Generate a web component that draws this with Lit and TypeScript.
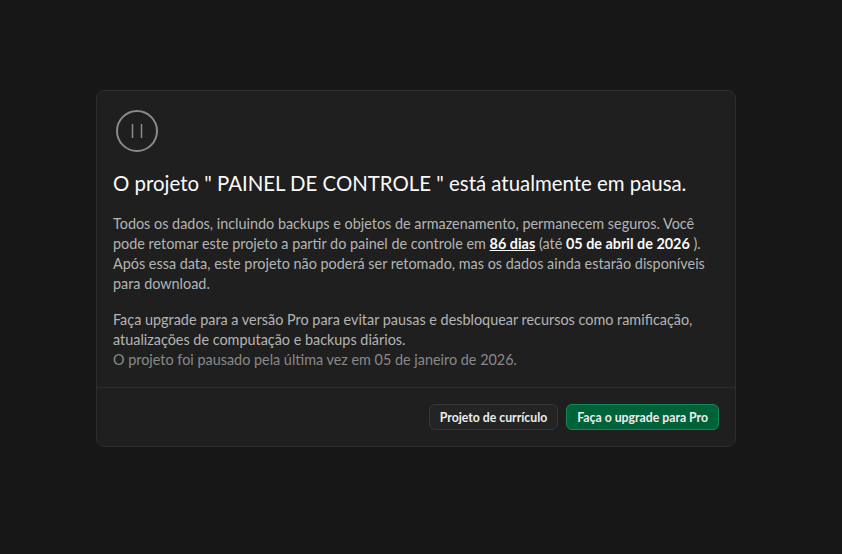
import { LitElement, html, css } from "lit";
import { customElement } from "lit/decorators.js";

@customElement("app-root")
export class AppRoot extends LitElement {
  static styles = css`
    :host { display: flex; width: 100%; height: 554px; background: #171717; align-items: flex-start; justify-content: flex-start; font-family: "Lato", "Liberation Sans", sans-serif; box-sizing: border-box; padding: 90px 0 0 96px; }
    .card { width: 640px; box-sizing: border-box; background: #1f1f1f; border: 1px solid #2e2e2e; border-radius: 8px; }
    .top { padding: 19px 16px 17px; }
    .icon { display: block; margin-left: 3px; margin-bottom: 17px; }
    h2 { margin: 0 0 17px; font-size: 20.4px; line-height: 28px; font-weight: 400; color: #fafafa; }
    p { margin: 0; font-size: 14.4px; line-height: 20px; color: #b4b4b4; }
    p + p { margin-top: 16px; }
    b { font-weight: 700; color: #fafafa; }
    .u { text-decoration: underline; }
    .dim { color: #898989; display: block; }
    .foot { display: flex; justify-content: flex-end; gap: 8px; border-top: 1px solid #2e2e2e; padding: 16px; }
    button { font: inherit; font-size: 12.25px; font-weight: 700; height: 26px; padding: 0 10px; border-radius: 6px; color: #ededed; background: #242424; border: 1px solid #363636; }
    .pri { background: #006239; border-color: #128a5a; }
  `;
  render() {
    return html`<div class="card">
      <div class="top">
        <svg class="icon" width="42" height="42" viewBox="0 0 42 42" fill="none">
          <circle cx="21" cy="21" r="20" stroke="#8a8a8a" stroke-width="2"/>
          <path d="M16.5 14v14M25.5 14v14" stroke="#8a8a8a" stroke-width="1.5"/>
        </svg>
        <h2>O projeto " PAINEL DE CONTROLE " está atualmente em pausa.</h2>
        <p>Todos os dados, incluindo backups e objetos de armazenamento, permanecem seguros. Você pode retomar este projeto a partir do painel de controle em <b class="u">86 dias</b> (até <b>05 de abril de 2026</b> ). Após essa data, este projeto não poderá ser retomado, mas os dados ainda estarão disponíveis para download.</p>
        <p>Faça upgrade para a versão Pro para evitar pausas e desbloquear recursos como ramificação, atualizações de computação e backups diários.<span class="dim">O projeto foi pausado pela última vez em 05 de janeiro de 2026.</span></p>
      </div>
      <div class="foot"><button>Projeto de currículo</button><button class="pri">Faça o upgrade para Pro</button></div>
    </div>`;
  }
}
